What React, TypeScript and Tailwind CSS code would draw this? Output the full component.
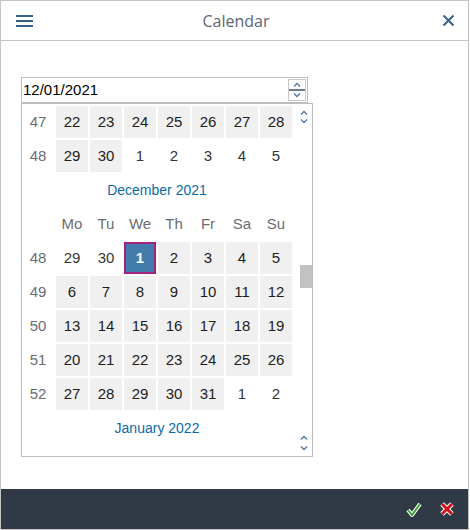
import React from 'react';

type Cell = { d: string; kind: 'in' | 'out' | 'sel' };

const font = { fontFamily: '"Liberation Sans", Arial, sans-serif' };

const row = (wk: string, days: Cell[]) => ({ wk, days });
const ins = (...n: number[]): Cell[] => n.map(d => ({ d: String(d), kind: 'in' }));
const outs = (...n: number[]): Cell[] => n.map(d => ({ d: String(d), kind: 'out' }));

const novTail = [
  row('47', ins(22, 23, 24, 25, 26, 27, 28)),
  row('48', [...ins(29, 30), ...outs(1, 2, 3, 4, 5)]),
];

const december = [
  row('48', [...outs(29, 30), { d: '1', kind: 'sel' }, ...ins(2, 3, 4, 5)]),
  row('49', ins(6, 7, 8, 9, 10, 11, 12)),
  row('50', ins(13, 14, 15, 16, 17, 18, 19)),
  row('51', ins(20, 21, 22, 23, 24, 25, 26)),
  row('52', [...ins(27, 28, 29, 30, 31), ...outs(1, 2)]),
];

const weekdays = ['Mo', 'Tu', 'We', 'Th', 'Fr', 'Sa', 'Su'];

function Chevron({ up, className }: { up?: boolean; className?: string }) {
  return (
    <svg width="8" height="5" viewBox="0 0 8 5" className={className}>
      <path d={up ? 'M1 4.5 L4 1.5 L7 4.5' : 'M1 0.5 L4 3.5 L7 0.5'} fill="none" stroke="#4a78a6" strokeWidth="1.3" />
    </svg>
  );
}

function DayRow({ wk, days }: { wk: string; days: Cell[] }) {
  return (
    <>
      <div className="h-[32px] flex items-center justify-center text-[#6a6d70]">{wk}</div>
      {days.map((c, i) => (
        <div
          key={i}
          className={
            c.kind === 'sel'
              ? 'h-[32px] flex items-center justify-center bg-[#427cac] border-2 border-[#a1237d] text-white font-bold'
              : c.kind === 'in'
              ? 'h-[32px] flex items-center justify-center bg-[#f0f0f0] text-[#1d1d1d]'
              : 'h-[32px] flex items-center justify-center text-[#32363a]'
          }
        >
          {c.d}
        </div>
      ))}
    </>
  );
}

export default function App() {
  return (
    <div className="w-[469px] h-[530px] bg-white border border-[#c4c4c4] flex flex-col" style={font}>
      <div className="h-[40px] shrink-0 border-b border-[#c4c4c4] flex items-center px-[15px]">
        <svg width="18" height="14" viewBox="0 0 18 14">
          <rect x="0" y="1" width="17" height="2" fill="#346187" />
          <rect x="0" y="6" width="17" height="2" fill="#346187" />
          <rect x="0" y="11" width="17" height="2" fill="#346187" />
        </svg>
        <div className="flex-1 text-center text-[16px] text-[#5b6670] pr-[4px]" style={{ fontFamily: '"Open Sans", "Noto Sans", sans-serif' }}>
          Calendar
        </div>
        <svg width="13" height="13" viewBox="0 0 13 13" className="mr-[-2px]">
          <path d="M1.5 1.5 L11.5 11.5 M11.5 1.5 L1.5 11.5" stroke="#346187" strokeWidth="2" />
        </svg>
      </div>

      <div className="flex-1 pt-[36px] pl-[20px]">
        <div className="w-[287px] h-[26px] border border-[#bdbdbd] flex items-center pl-[1px] pr-[1px]">
          <span className="flex-1 text-[15px] text-black">12/01/2021</span>
          <div className="w-[18px] h-[22px] border border-[#c8c8c8] flex flex-col">
            <div className="flex-1 flex items-center justify-center border-b-2 border-[#6b7d8f]">
              <Chevron up />
            </div>
            <div className="flex-1 flex items-center justify-center">
              <Chevron />
            </div>
          </div>
        </div>

        <div className="w-[292px] h-[354px] border border-[#bdbdbd] flex text-[15px]">
          <div className="grid grid-cols-[repeat(8,32px)] gap-[2px] auto-rows-[32px] pt-[2px] content-start">
            {novTail.map(r => (
              <DayRow key={'n' + r.wk} wk={r.wk} days={r.days} />
            ))}
            <div className="col-span-8 flex items-center justify-center text-[14px] text-[#0a6aa8]">December 2021</div>
            <div />
            {weekdays.map(w => (
              <div key={w} className="flex items-center justify-center text-[#6a6d70]">
                {w}
              </div>
            ))}
            {december.map(r => (
              <DayRow key={'d' + r.wk} wk={r.wk} days={r.days} />
            ))}
            <div className="col-span-8 flex items-center justify-center text-[14px] text-[#0a6aa8]">January 2022</div>
          </div>
          <div className="flex-1 flex flex-col items-end">
            <div className="w-[17px] flex flex-col items-center pt-[6px] gap-[4px]">
              <Chevron up />
              <Chevron />
            </div>
            <div className="mt-[141px] w-[12px] h-[23px] bg-[#c2c2c2]" />
            <div className="mt-auto w-[17px] flex flex-col items-center pb-[5px] gap-[6px]">
              <Chevron up />
              <Chevron />
            </div>
          </div>
        </div>
      </div>

      <div className="h-[40px] shrink-0 bg-[#2f3a46] flex items-center justify-end gap-[17px] pr-[13px]">
        <svg width="16" height="16" viewBox="0 0 16 16">
          <path d="M2 9 L6 14 L14 3" fill="none" stroke="#ffffff" strokeWidth="4" strokeLinejoin="round" />
          <path d="M2 9 L6 14 L14 3" fill="none" stroke="#3aa33a" strokeWidth="2" />
        </svg>
        <svg width="16" height="16" viewBox="0 0 16 16">
          <path d="M3 3 L13 13 M13 3 L3 13" stroke="#ffffff" strokeWidth="5" />
          <path d="M3 3 L13 13 M13 3 L3 13" stroke="#d0141e" strokeWidth="3" />
        </svg>
      </div>
    </div>
  );
}
